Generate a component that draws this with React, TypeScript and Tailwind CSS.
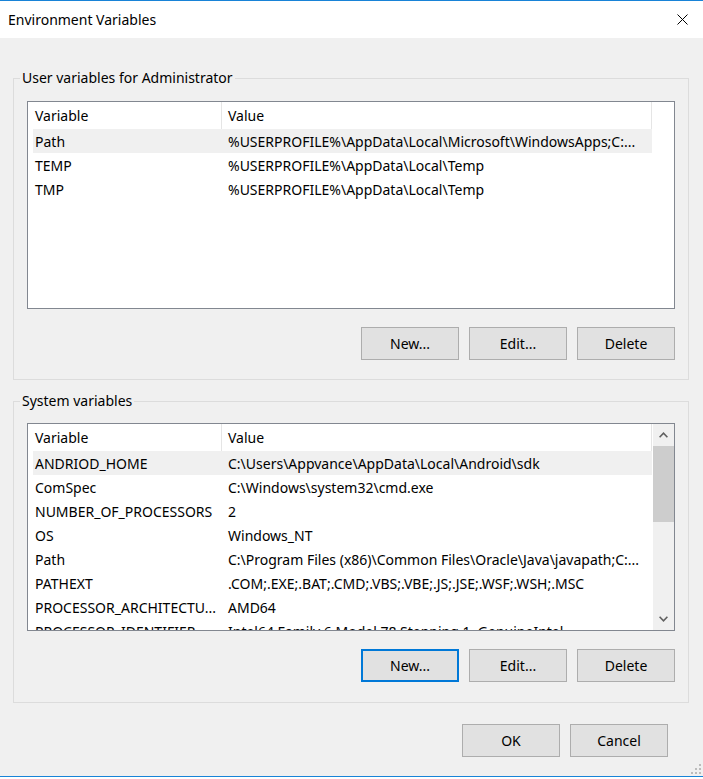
import clsx from "clsx";

const userVars = [
  ["Path", "%USERPROFILE%\\AppData\\Local\\Microsoft\\WindowsApps;C:..."],
  ["TEMP", "%USERPROFILE%\\AppData\\Local\\Temp"],
  ["TMP", "%USERPROFILE%\\AppData\\Local\\Temp"],
];

const systemVars = [
  ["ANDRIOD_HOME", "C:\\Users\\Appvance\\AppData\\Local\\Android\\sdk"],
  ["ComSpec", "C:\\Windows\\system32\\cmd.exe"],
  ["NUMBER_OF_PROCESSORS", "2"],
  ["OS", "Windows_NT"],
  ["Path", "C:\\Program Files (x86)\\Common Files\\Oracle\\Java\\javapath;C:..."],
  ["PATHEXT", ".COM;.EXE;.BAT;.CMD;.VBS;.VBE;.JS;.JSE;.WSF;.WSH;.MSC"],
  ["PROCESSOR_ARCHITECTU...", "AMD64"],
  ["PROCESSOR_IDENTIFIER", "Intel64 Family 6 Model 78 Stepping 1, GenuineIntel"],
];

function Chevron({ down }: { down?: boolean }) {
  return (
    <svg width="9" height="6" viewBox="0 0 9 6" className={clsx(down && "rotate-180")}>
      <path d="M0.6 5.2 L4.5 1.2 L8.4 5.2" fill="none" stroke="#606060" strokeWidth="1.6" />
    </svg>
  );
}

function Scrollbar() {
  return (
    <div className="flex w-[21px] flex-col bg-[#f0f0f0]">
      <div className="flex h-[22px] items-center justify-center">
        <Chevron />
      </div>
      <div className="h-[76px] bg-[#cdcdcd]" />
      <div className="flex-1" />
      <div className="flex h-[22px] items-center justify-center">
        <Chevron down />
      </div>
    </div>
  );
}

function VarList({ rows, scroll }: { rows: string[][]; scroll?: boolean }) {
  return (
    <div className="flex h-[208px] border border-[#828790] bg-white">
      <div className="flex-1 overflow-hidden">
        {/* header */}
        <div className="flex h-[27px] w-[624px]">
          <div className="flex w-[194px] items-center border-r border-[#e5e5e5] pl-[7px]">Variable</div>
          <div className="flex flex-1 items-center border-r border-[#e5e5e5] pl-[6px]">Value</div>
        </div>
        {rows.map(([name, value], i) => (
          <div
            key={name + i}
            className={clsx(
              "ml-[5px] flex h-[24px] w-[619px] items-center whitespace-nowrap",
              i === 0 && "bg-[#f0f0f0]"
            )}
          >
            <div className="w-[189px] overflow-hidden pl-[2px]">{name}</div>
            <div className="flex-1 overflow-hidden pl-[6px]">{value}</div>
          </div>
        ))}
      </div>
      {scroll && <Scrollbar />}
    </div>
  );
}

function Btn({ children, focused }: { children: string; focused?: boolean }) {
  return (
    <button
      className={clsx(
        "flex h-[33px] w-[98px] items-center justify-center bg-[#e1e1e1]",
        focused ? "border-2 border-[#0078d7]" : "border border-[#adadad]"
      )}
    >
      {children}
    </button>
  );
}

function Group({
  title,
  rows,
  scroll,
  focused,
  className,
}: {
  title: string;
  rows: string[][];
  scroll?: boolean;
  focused?: boolean;
  className?: string;
}) {
  return (
    <fieldset className={clsx("border border-[#dcdcdc] px-[13px]", className)}>
      <legend className="-ml-[7px] px-[2px] leading-[20px]">{title}</legend>
      <VarList rows={rows} scroll={scroll} />
      <div className="mt-[18px] flex justify-end gap-[10px]">
        <Btn focused={focused}>New...</Btn>
        <Btn>Edit...</Btn>
        <Btn>Delete</Btn>
      </div>
    </fieldset>
  );
}

export default function App() {
  return (
    <div className="h-[779px] w-[703px] bg-white font-['Noto_Sans',sans-serif] text-[14px] text-black">
      <div className="flex h-[777px] flex-col border-y border-[#1883d7] bg-[#f0f0f0]">
        {/* title bar */}
        <div className="flex h-[37px] items-center justify-between bg-white pl-[8px] pr-[15px]">
          <span>Environment Variables</span>
          <svg width="11" height="11" viewBox="0 0 11 11">
            <path d="M0.5 0.5 L10.5 10.5 M10.5 0.5 L0.5 10.5" stroke="#000" strokeWidth="1" />
          </svg>
        </div>

        <div className="relative flex-1 pl-[13px] pr-[14px] pt-[30px]">
          <Group title="User variables for Administrator" rows={userVars} className="pt-[13px] pb-[19px]" />
          <Group
            title="System variables"
            rows={systemVars}
            scroll
            focused
            className="mt-[11px] pt-[12px] pb-[20px]"
          />

          <div className="mt-[21px] flex justify-end gap-[10px] pr-[21px]">
            <Btn>OK</Btn>
            <Btn>Cancel</Btn>
          </div>

          {/* size grip */}
          <svg width="10" height="10" viewBox="0 0 10 10" className="absolute bottom-[2px] right-[2px]">
            <g fill="#bcbcbc">
              <rect x="8" y="0" width="2" height="2" />
              <rect x="4" y="4" width="2" height="2" />
              <rect x="8" y="4" width="2" height="2" />
              <rect x="0" y="8" width="2" height="2" />
              <rect x="4" y="8" width="2" height="2" />
              <rect x="8" y="8" width="2" height="2" />
            </g>
          </svg>
        </div>
      </div>
    </div>
  );
}
